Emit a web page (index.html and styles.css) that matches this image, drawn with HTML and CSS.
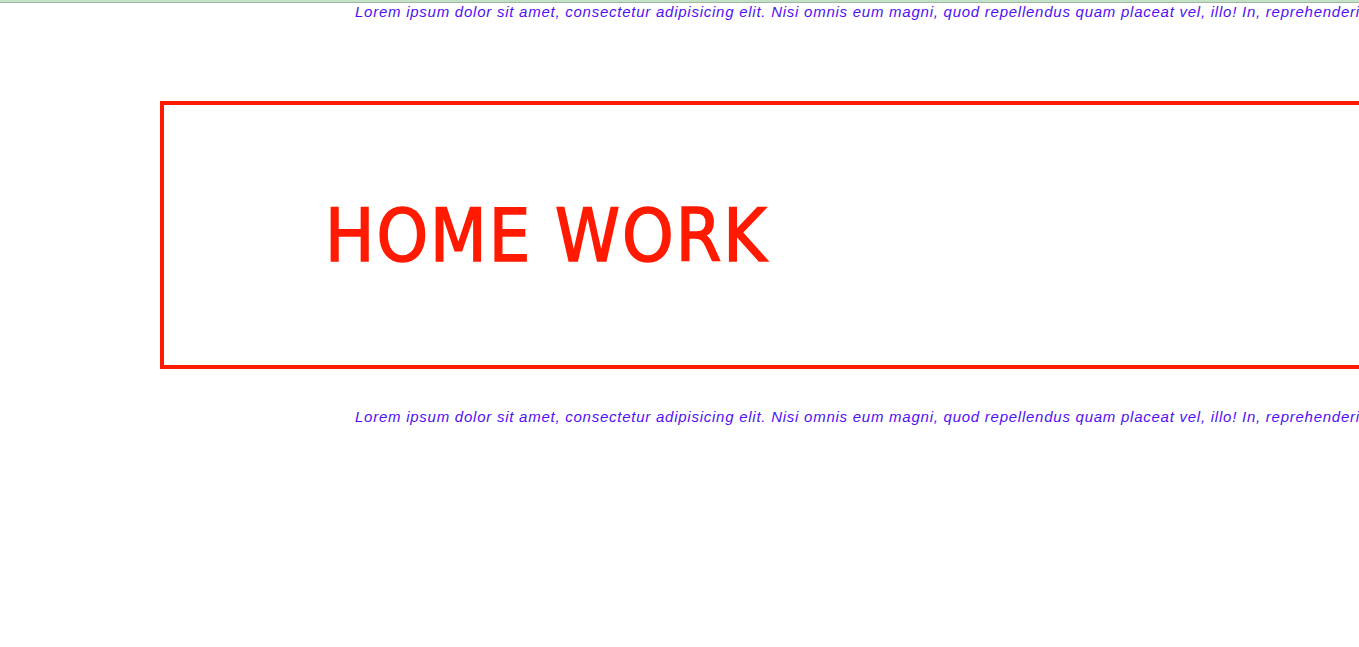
FILE: index.html
```html
<!DOCTYPE html>
<html lang="en">
<head>
<meta charset="utf-8">
<title>Home Work</title>
<link rel="stylesheet" href="styles.css">
</head>
<body>
<div class="topbar"></div>
<p class="lorem">Lorem ipsum dolor sit amet, consectetur adipisicing elit. Nisi omnis eum magni, quod repellendus quam placeat vel, illo! In, reprehenderit, voluptatem.</p>
<section class="box">
  <h1 class="title">HOME WORK</h1>
</section>
<p class="lorem lorem-below">Lorem ipsum dolor sit amet, consectetur adipisicing elit. Nisi omnis eum magni, quod repellendus quam placeat vel, illo! In, reprehenderit, voluptatem.</p>
</body>
</html>
```
FILE: styles.css
```css
html, body {
  margin: 0;
  padding: 0;
  background: #ffffff;
  overflow: hidden;
}
body {
  width: 1359px;
  height: 647px;
}
.topbar {
  height: 2px;
  background: #c4e1c8;
  border-bottom: 1px solid #9db9a2;
}
.lorem {
  margin: 0 0 0 355px;
  white-space: nowrap;
  font-family: "Liberation Sans", sans-serif;
  font-style: italic;
  font-size: 15px;
  line-height: 17px;
  letter-spacing: 0.75px;
  color: #5010f5;
}
.box {
  margin: 81px 0 0 160px;
  width: 1400px;
  height: 260px;
  border: 4px solid #ff1a00;
  display: flex;
  align-items: center;
  padding-left: 161px;
  box-sizing: content-box;
}
.title {
  margin: 0;
  font-family: "DejaVu Sans Condensed", "DejaVu Sans", sans-serif;
  font-weight: normal;
  font-size: 73px;
  line-height: 1;
  color: #ff1a00;
  letter-spacing: 2px;
  -webkit-text-stroke: 1.6px #ff1a00;
}
.lorem-below {
  margin-top: 39px;
}
```
